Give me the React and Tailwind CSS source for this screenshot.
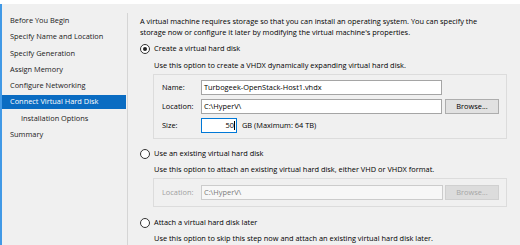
function Radio({ checked }) {
  return (
    <div className="w-[10px] h-[10px] rounded-full border border-[#333333] bg-white flex items-center justify-center shrink-0">
      {checked && <div className="w-[4px] h-[4px] rounded-full bg-[#222222]" />}
    </div>
  );
}

const items = [
  { label: "Before You Begin" },
  { label: "Specify Name and Location" },
  { label: "Specify Generation" },
  { label: "Assign Memory" },
  { label: "Configure Networking" },
  { label: "Connect Virtual Hard Disk", active: true },
  { label: "Installation Options", indent: true },
  { label: "Summary" },
];

export default function App() {
  return (
    <div className="w-[520px] h-[245px] bg-[#f0f0f0] overflow-hidden flex flex-col text-[7.4px] text-black font-['Open_Sans',sans-serif]">
      <div className="h-[4px] bg-white shrink-0" />
      <div className="flex flex-1 border-l-2 border-[#4199e6]">
        <div className="w-[124px] pt-[9.5px] flex flex-col gap-[2.3px] shrink-0">
          {items.map((it) => (
            <div
              key={it.label}
              className={
                "h-[14px] flex items-center " +
                (it.indent ? "pl-[19px] " : "pl-[8px] ") +
                (it.active ? "bg-[#0a6cc2] text-white" : "text-[#1a1a1a]")
              }
            >
              {it.label}
            </div>
          ))}
        </div>
        <div className="ml-[1px] mt-[9px] w-px bg-[#d5d5d5] shrink-0" />
        <div className="flex-1 pl-[12px] pt-[11.5px] flex flex-col">
          <p className="leading-[11px]">
            A virtual machine requires storage so that you can install an operating system. You can specify the
            <br />
            storage now or configure it later by modifying the virtual machine's properties.
          </p>

          <div className="mt-[5.5px] h-[12px] flex items-center">
            <Radio checked />
            <span className="ml-[4px]">Create a virtual hard disk</span>
          </div>
          <div className="mt-[4.5px] pl-[14px] leading-[11px]">
            Use this option to create a VHDX dynamically expanding virtual hard disk.
          </div>

          <div className="mt-[3.5px] ml-[13px] w-[354px] border border-[#dcdcdc] pl-[8px] pt-[5px] pb-[5px] flex flex-col gap-[4px]">
            <div className="h-[15px] flex items-center">
              <span className="w-[39px] shrink-0">Name:</span>
              <div className="w-[241px] h-[15px] border border-[#a5a5a5] bg-white flex items-center pl-[2px]">
                Turbogeek-OpenStack-Host1.vhdx
              </div>
            </div>
            <div className="h-[15px] flex items-center">
              <span className="w-[39px] shrink-0">Location:</span>
              <div className="w-[241px] h-[15px] border border-[#a5a5a5] bg-white flex items-center pl-[2px]">
                C:\HyperV\
              </div>
              <div className="ml-[3px] w-[54px] h-[15px] border border-[#adadad] bg-[#e1e1e1] flex items-center justify-center">
                Browse...
              </div>
            </div>
            <div className="h-[15px] flex items-center">
              <span className="w-[39px] shrink-0">Size:</span>
              <div className="w-[36px] h-[15px] border border-[#0078d7] bg-white flex items-center justify-end pr-[1px]">
                <span>50</span>
                <span className="w-px h-[9px] bg-black" />
              </div>
              <span className="ml-[5px]">GB (Maximum: 64 TB)</span>
            </div>
          </div>

          <div className="mt-[9px] h-[12px] flex items-center">
            <Radio />
            <span className="ml-[4px]">Use an existing virtual hard disk</span>
          </div>
          <div className="mt-[3.5px] pl-[14px] leading-[11px]">
            Use this option to attach an existing virtual hard disk, either VHD or VHDX format.
          </div>

          <div className="mt-[3.5px] ml-[13px] w-[354px] border border-[#dcdcdc] pl-[8px] pt-[6px] pb-[6px] flex flex-col">
            <div className="h-[15px] flex items-center">
              <span className="w-[39px] shrink-0 text-[#a0a0a0]">Location:</span>
              <div className="w-[242px] h-[15px] border border-[#cccccc] bg-[#f7f7f7] flex items-center pl-[2px] text-[#7a7a7a]">
                C:\HyperV\
              </div>
              <div className="ml-[2px] w-[54px] h-[15px] border border-[#d0d0d0] bg-[#dcdcdc] flex items-center justify-center text-[#a6a6a6]">
                Browse...
              </div>
            </div>
          </div>

          <div className="mt-[10px] h-[12px] flex items-center">
            <Radio />
            <span className="ml-[4px]">Attach a virtual hard disk later</span>
          </div>
          <div className="mt-[3.5px] pl-[14px] leading-[11px] whitespace-nowrap">
            Use this option to skip this step now and attach an existing virtual hard disk later.
          </div>
        </div>
      </div>
    </div>
  );
}
